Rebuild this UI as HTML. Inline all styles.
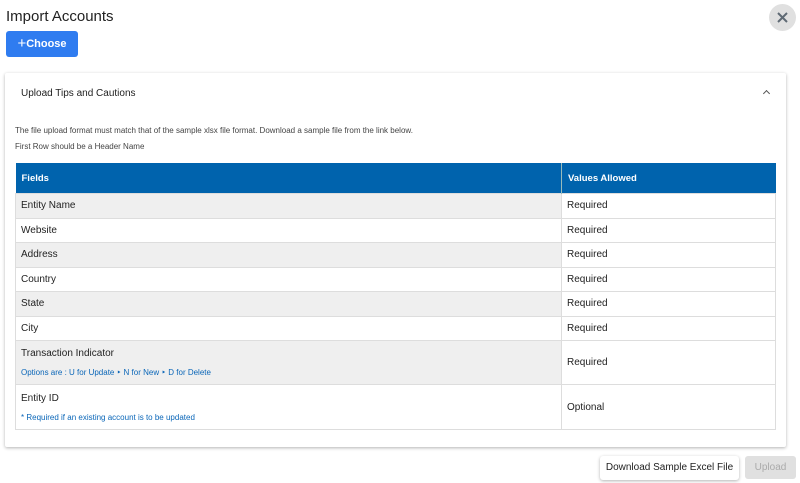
<!DOCTYPE html>
<html><head><style>
body{margin:0;width:800px;height:483px;background:#fff;font-family:"Liberation Sans",Arial,sans-serif;position:relative;overflow:hidden;color:#222}
.t{position:absolute;left:6px;top:8px;font-size:15px;color:#222}
.choose{position:absolute;left:6px;top:31px;width:72px;height:26px;background:#2f7cf0;border-radius:3px;color:#fff;font-size:11px;font-weight:bold;line-height:25px;text-align:center}
.close{position:absolute;left:769px;top:4px;width:27px;height:27px;border-radius:50%;background:#e0e0e0}
.card{position:absolute;left:5px;top:73px;width:781px;height:374px;background:#fff;box-shadow:0 1px 3px rgba(0,0,0,.3);border-radius:2px}
.ut{position:absolute;left:21px;top:88px;font-size:10px}
.chev{position:absolute;left:764px;top:91px;width:4px;height:4px;border-left:1.5px solid #555;border-top:1.5px solid #555;transform:rotate(45deg)}
.p{position:absolute;left:15px;font-size:8px;color:#444}
table{position:absolute;left:15px;top:163px;width:761px;border-collapse:collapse;font-size:10px}
th{background:#0063ad;color:#fff;text-align:left;height:30px;padding:0 6px;font-size:9.5px;border-right:1px solid #9bb;}
td{padding:0 5px;border:1px solid #ddd;height:23.5px;}
tr.g td{background:#efefef}
td.v{width:203px}
.s{color:#0a66b8;font-size:8px;margin-top:9px}
.dl{position:absolute;left:600px;top:456px;width:139px;height:24px;box-shadow:0 1px 3px rgba(0,0,0,.3);border-radius:3px;font-size:10px;text-align:center;line-height:24px}
.up{position:absolute;left:745px;top:456px;width:51px;height:23px;background:#e0e0e0;border-radius:3px;color:#aaa;font-size:10px;text-align:center;line-height:23px}
</style></head><body>
<div class="t">Import Accounts</div>
<div class="choose"><span style="font-weight:normal;font-size:15px;vertical-align:-1px">+</span>Choose</div>
<div class="close"><svg width="27" height="27"><path d="M9 9L18 18M18 9L9 18" stroke="#5f6a74" stroke-width="2"/></svg></div>
<div class="card"></div>
<div class="ut">Upload Tips and Cautions</div>
<div class="chev"></div>
<div class="p" style="top:126px">The file upload format must match that of the sample xlsx file format. Download a sample file from the link below.</div>
<div class="p" style="top:142px">First Row should be a Header Name</div>
<table>
<tr><th>Fields</th><th class="v" style="border-right:none">Values Allowed</th></tr>
<tr class="g"><td>Entity Name</td><td class="v" style="background:#fff">Required</td></tr>
<tr><td>Website</td><td>Required</td></tr>
<tr class="g"><td>Address</td><td style="background:#fff">Required</td></tr>
<tr><td>Country</td><td>Required</td></tr>
<tr class="g"><td>State</td><td style="background:#fff">Required</td></tr>
<tr><td>City</td><td>Required</td></tr>
<tr class="g"><td style="height:43px">Transaction Indicator<div class="s">Options are : U for Update ‣ N for New ‣ D for Delete</div></td><td style="background:#fff">Required</td></tr>
<tr><td style="height:44px">Entity ID<div class="s">* Required if an existing account is to be updated</div></td><td>Optional</td></tr>
</table>
<div class="dl">Download Sample Excel File</div>
<div class="up">Upload</div>
</body></html>
